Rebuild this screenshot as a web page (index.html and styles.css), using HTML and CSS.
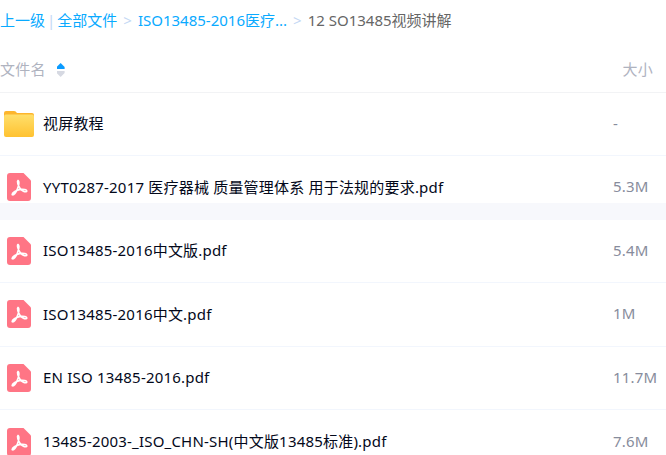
FILE: index.html
```html
<!DOCTYPE html>
<html lang="zh-CN">
<head>
  <meta charset="UTF-8" />
  <title>文件列表</title>
  <link rel="stylesheet" href="styles.css">
</head>
<body>
  <svg class="sprites" width="0" height="0">
    <symbol id="pdf" viewBox="0 0 24 28">
      <path d="M3 0h13.500L24 7.500V25a3 3 0 0 1-3 3H3a3 3 0 0 1-3-3V3a3 3 0 0 1 3-3z" fill="#ff7585"/>
      <path d="M11 7.500c-1.200.8.200 5 2 7.800 2 2.800 5 4.200 6.700 3 .4-1.800-3.500-2.500-7.300-1.700-3.500.8-7.300 3.300-7.200 5 1.500 1 3.900-2.200 5.300-5.800 1.200-3.200 1.800-7.400.5-8.300z" fill="none" stroke="#fff" stroke-width="1.700" stroke-linejoin="round"/>
    </symbol>
  </svg>

  <nav class="crumbs">
    <a href="#">上一级</a><span class="pipe">|</span><a href="#">全部文件</a><span class="sep">&gt;</span><a href="#">ISO13485-2016医疗...</a><span class="sep">&gt;</span><span class="current">12 SO13485视频讲解</span>
  </nav>

  <div class="head">
    <div class="head-name">
      <span>文件名</span>
      <span class="sort"><i class="up"></i><i class="down"></i></span>
    </div>
    <div class="head-size">大小</div>
  </div>

  <ul class="files">
    <li class="file">
      <svg class="icon-folder" viewBox="0 0 30 26">
        <path d="M2 0h8c1.500 0 2 .7 3 2h15a2 2 0 0 1 2 2v3H0V2a2 2 0 0 1 2-2z" fill="#fdb52c"/>
        <rect y="3.500" width="30" height="22.500" rx="2" fill="url(#folderFill)"/>
        <defs>
          <linearGradient id="folderFill" x1="0" y1="0" x2="0" y2="1">
            <stop offset="0" stop-color="#ffdf6b"/>
            <stop offset="1" stop-color="#ffc231"/>
          </linearGradient>
        </defs>
      </svg>
      <span class="name">视屏教程</span>
      <span class="size">-</span>
    </li>
    <li class="file file-band">
      <svg class="icon-pdf"><use href="#pdf"/></svg>
      <span class="name">YYT0287-2017 医疗器械 质量管理体系 用于法规的要求.pdf</span>
      <span class="size">5.3M</span>
    </li>
    <li class="file">
      <svg class="icon-pdf"><use href="#pdf"/></svg>
      <span class="name">ISO13485-2016中文版.pdf</span>
      <span class="size">5.4M</span>
    </li>
    <li class="file">
      <svg class="icon-pdf"><use href="#pdf"/></svg>
      <span class="name">ISO13485-2016中文.pdf</span>
      <span class="size">1M</span>
    </li>
    <li class="file">
      <svg class="icon-pdf"><use href="#pdf"/></svg>
      <span class="name">EN ISO 13485-2016.pdf</span>
      <span class="size">11.7M</span>
    </li>
    <li class="file">
      <svg class="icon-pdf"><use href="#pdf"/></svg>
      <span class="name">13485-2003-_ISO_CHN-SH(中文版13485标准).pdf</span>
      <span class="size">7.6M</span>
    </li>
  </ul>
</body>
</html>
```

FILE: styles.css
```css
html, body {
  height: 455px;
  overflow: hidden;
}

body {
  margin: 0;
  background: #fff;
  font-family: "Noto Sans", "Noto Sans CJK SC", sans-serif;
  font-size: 15px;
  letter-spacing: .2px;
  color: #03081a;
}

.sprites {
  position: absolute;
}

.crumbs {
  height: 40px;
  line-height: 40px;
  white-space: nowrap;
  letter-spacing: 0;
  color: #666;
}

.crumbs a {
  color: #09aaff;
  text-decoration: none;
}

.pipe {
  margin: 0 2px;
  color: #c4d8f4;
}

.sep {
  margin: 0 6px;
  color: #c4d8f4;
}

.current {
  color: #666;
}

.head {
  display: flex;
  justify-content: space-between;
  align-items: center;
  height: 53px;
  padding-top: 5px;
  box-sizing: border-box;
  color: #afb3bf;
  border-bottom: 1px solid #f2f3f5;
}

.head-name {
  display: flex;
  align-items: center;
  gap: 11px;
}

.head-size {
  padding-right: 13px;
}

.sort {
  display: flex;
  flex-direction: column;
  gap: 2px;
  margin-top: 3px;
}

.sort i {
  width: 8px;
  height: 6px;
  display: block;
}

.sort .up {
  background: #0a9bff;
  clip-path: polygon(50% 0, 100% 65%, 100% 100%, 0 100%, 0 65%);
}

.sort .down {
  background: #d6d9e2;
  clip-path: polygon(0 0, 100% 0, 100% 35%, 50% 100%, 0 35%);
}

.files {
  list-style: none;
  margin: -0.7px 0 0;
  padding: 0;
}

.file {
  display: flex;
  align-items: center;
  height: 62.6px;
  border-bottom: 1px solid #f2f6fd;
}

.file-band {
  background: linear-gradient(#fff 47.5px, #f7f8fc 47.5px);
  border-bottom-color: #f7f8fc;
}

.icon-folder {
  width: 30px;
  height: 26px;
  margin-left: 4px;
  margin-right: 9px;
  flex: none;
}

.icon-pdf {
  width: 24px;
  height: 28px;
  margin-left: 7px;
  margin-right: 12px;
  flex: none;
}

.name {
  flex: 1;
  margin-bottom: 2px;
}

.size {
  width: 53px;
  margin-bottom: 2px;
  color: #878c9c;
}
```
